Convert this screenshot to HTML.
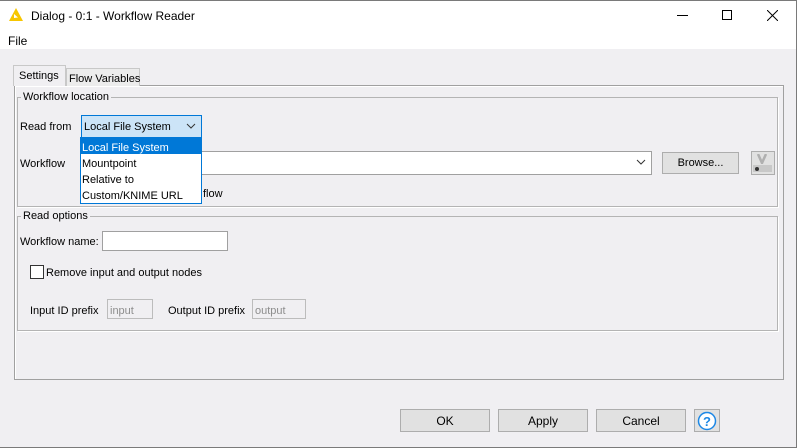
<!DOCTYPE html><html><head><style>
*{box-sizing:border-box;margin:0;padding:0}
body{width:797px;height:448px;overflow:hidden;font:11px "Liberation Sans",sans-serif;color:#000;background:#f0eff2;position:relative}
.a{position:absolute;white-space:nowrap}
.t{line-height:14px}
.btn{position:absolute;background:#e1e1e1;border:1px solid #adadad;text-align:center}
.inp{position:absolute;background:#fff;border:1px solid #a0a0a0}
.grp{position:absolute;border:1px solid #b4b4b4;box-shadow:1px 1px 0 #fff}
.lg{position:absolute;background:#f0eff2;padding:0 2px;line-height:12px}
</style></head><body>
<div class="a" style="left:0;top:0;width:797px;height:49px;background:#fff"></div>
<div class="a" style="left:0;top:0;width:797px;height:448px;border:1px solid #7a7a7a;border-left:none"></div>
<svg class="a" style="left:9px;top:8px" width="14" height="13"><polygon points="7,0 14,13 0,13" fill="#f7c600"/><polygon points="5,6 9,9.5 5,10" fill="#fff"/></svg>
<div class="a t" style="left:31px;top:9px;font-size:12px">Dialog - 0:1 - Workflow Reader</div>
<div class="a" style="left:677px;top:15px;width:11px;height:1px;background:#000"></div>
<div class="a" style="left:722px;top:10px;width:10px;height:10px;border:1px solid #000"></div>
<svg class="a" style="left:767px;top:10px" width="11" height="11"><path d="M0 0L11 11M11 0L0 11" stroke="#000" stroke-width="1"/></svg>
<div class="a t" style="left:8px;top:34px;font-size:12px">File</div>
<div class="a" style="left:14px;top:85px;width:770px;height:295px;border:1px solid #a0a0a0;box-shadow:inset 1px 1px 0 #fff"></div>
<div class="a" style="left:66px;top:68px;width:74px;height:18px;border:1px solid #c8c8c8;border-bottom:none;background:#ececec"></div>
<div class="a t" style="left:69px;top:72px">Flow Variables</div>
<div class="a" style="left:13px;top:65px;width:53px;height:21px;border:1px solid #c8c8c8;border-bottom:none;background:#f0eff2"></div>
<div class="a t" style="left:19px;top:69px">Settings</div>
<div class="grp" style="left:17px;top:97px;width:761px;height:110px"></div>
<div class="lg" style="left:21px;top:91px">Workflow location</div>
<div class="a t" style="left:20px;top:120px">Read from</div>
<div class="a" style="left:81px;top:115px;width:121px;height:23px;background:#cce4f7;border:1px solid #0078d7"></div>
<div class="a t" style="left:84px;top:120px">Local File System</div>
<svg class="a" style="left:186px;top:123px" width="10" height="6"><path d="M1 1l4 4 4-4" stroke="#333" fill="none"/></svg>
<div class="a t" style="left:20px;top:157px">Workflow</div>
<div class="inp" style="left:199px;top:151px;width:453px;height:24px"></div>
<svg class="a" style="left:636px;top:159px" width="10" height="6"><path d="M1 1l4 4 4-4" stroke="#333" fill="none"/></svg>
<div class="btn t" style="left:662px;top:152px;width:77px;height:22px;line-height:21px">Browse...</div>
<div class="a" style="left:751px;top:151px;width:24px;height:24px;border:1px solid #adadad;background:#e1e1e1"></div>
<div class="a" style="left:753px;top:165px;width:19px;height:7px;background:#c8c8c8"></div>
<div class="a" style="left:755px;top:167px;width:4px;height:4px;border-radius:2px;background:#333"></div>
<svg class="a" style="left:757px;top:154px" width="10" height="10"><path d="M1 0l4 9 4-9" stroke="#b0b0b0" stroke-width="2.5" fill="none"/></svg>
<div class="a t" style="left:203px;top:187px">flow</div>
<div class="a" style="left:80px;top:137px;width:122px;height:67px;background:#fff;border:1px solid #0078d7"></div>
<div class="a" style="left:81px;top:138px;width:120px;height:16px;background:#0078d7"></div>
<div class="a t" style="left:82px;top:141px;color:#fff">Local File System</div>
<div class="a t" style="left:82px;top:157px">Mountpoint</div>
<div class="a t" style="left:82px;top:173px">Relative to</div>
<div class="a t" style="left:82px;top:189px">Custom/KNIME URL</div>
<div class="grp" style="left:17px;top:216px;width:761px;height:115px"></div>
<div class="lg" style="left:21px;top:210px">Read options</div>
<div class="a t" style="left:20px;top:235px">Workflow name:</div>
<div class="inp" style="left:102px;top:231px;width:126px;height:20px"></div>
<div class="a" style="left:30px;top:265px;width:14px;height:14px;border:1px solid #333;background:#fff"></div>
<div class="a t" style="left:46px;top:266px">Remove input and output nodes</div>
<div class="a t" style="left:30px;top:304px">Input ID prefix</div>
<div class="a" style="left:107px;top:299px;width:46px;height:20px;border:1px solid #bcbcbc"></div>
<div class="a t" style="left:110px;top:304px;color:#8d8d8d">input</div>
<div class="a t" style="left:168px;top:304px">Output ID prefix</div>
<div class="a" style="left:252px;top:299px;width:54px;height:20px;border:1px solid #bcbcbc"></div>
<div class="a t" style="left:255px;top:304px;color:#8d8d8d">output</div>
<div class="btn t" style="left:400px;top:409px;width:90px;height:23px;line-height:22px;font-size:12px">OK</div>
<div class="btn t" style="left:498px;top:409px;width:90px;height:23px;line-height:22px;font-size:12px">Apply</div>
<div class="btn t" style="left:596px;top:409px;width:90px;height:23px;line-height:22px;font-size:12px">Cancel</div>
<div class="btn" style="left:694px;top:409px;width:26px;height:23px"></div>
<svg class="a" style="left:697px;top:411px" width="20" height="20"><circle cx="10" cy="10" r="8.5" fill="#fff" stroke="#1e88e5" stroke-width="1.5"/><text x="10" y="15" font-family="Liberation Sans" font-size="13" font-weight="bold" fill="#1e88e5" text-anchor="middle">?</text></svg>
</body></html>
